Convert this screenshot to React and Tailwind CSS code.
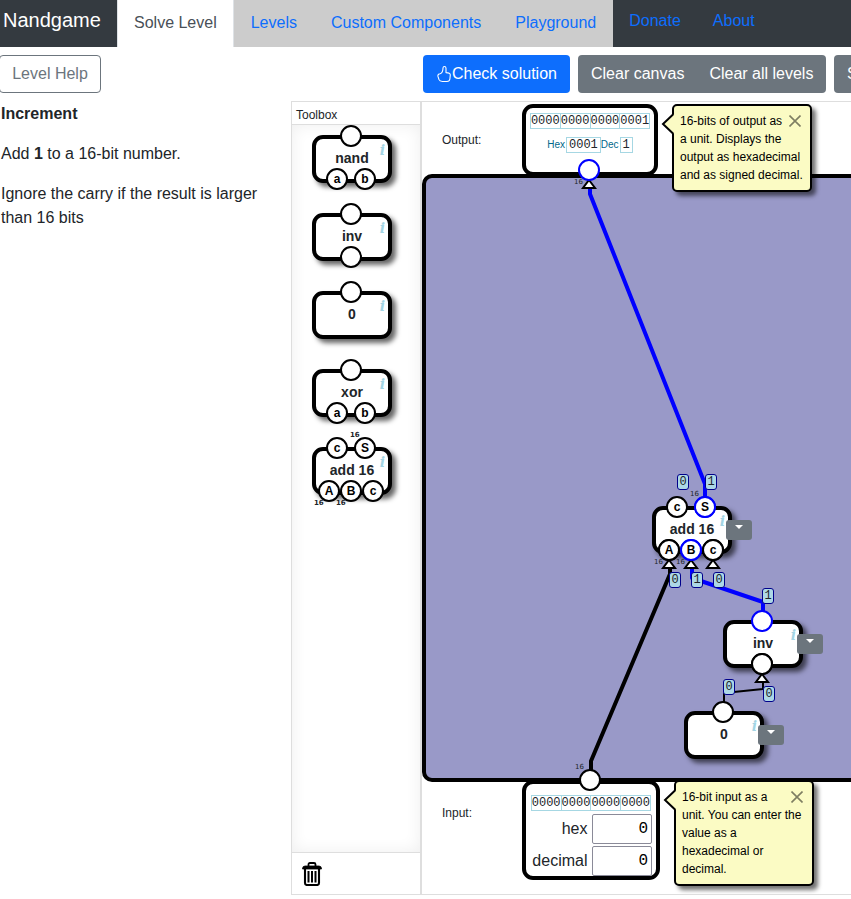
import React from "react";

const sans = "font-['Liberation_Sans',Arial,sans-serif]";
const mono = "font-['Liberation_Mono','Courier_New',monospace]";

function Pin({ label, on }) {
  return (
    <span
      className={`flex size-[22px] items-center justify-center rounded-full border-2 bg-white text-[12px] leading-none font-bold text-black ${on ? "border-[#0000ff]" : "border-black"}`}
    >
      {label}
    </span>
  );
}

function WidthTag({ className, bold }) {
  return (
    <span
      className={`absolute font-['DejaVu_Sans',sans-serif] text-[7px] leading-none text-[#212529] ${bold ? "font-bold" : ""} ${className}`}
    >
      16
    </span>
  );
}

// A component: outputs sit on the top edge and inputs on the bottom edge.
function Component({ name, outs = [""], ins = [], hot = [], wide, boldTags }) {
  return (
    <div className="relative h-12 w-20 rounded-[11px] border-4 border-black bg-white shadow-[4px_4px_5px_rgba(0,0,0,0.6)]">
      <div className="pt-2 text-center text-[14px] leading-[22px] font-bold text-[#212529]">{name}</div>
      <span className="absolute top-[3px] right-[3px] font-['DejaVu_Serif',serif] text-[14px] leading-4 font-bold text-[#a3d5e4] italic">
        i
      </span>
      <div className="absolute -top-[14px] -left-[5px] flex w-20 justify-center gap-1.5">
        {outs.map((p, i) => (
          <Pin key={i} label={p} on={hot.includes(p || "out")} />
        ))}
      </div>
      <div className={`absolute top-[29px] -left-[5px] flex w-20 justify-center ${ins.length > 2 ? "gap-0" : "gap-1.5"}`}>
        {ins.map((p, i) => (
          <Pin key={i} label={p} on={hot.includes(p || "in")} />
        ))}
      </div>
      {wide && (
        <>
          <WidthTag bold={boldTags} className="-top-[19px] left-[34px]" />
          <WidthTag bold={boldTags} className="top-[49px] -left-[2px]" />
          <WidthTag bold={boldTags} className="top-[49px] left-[20px]" />
        </>
      )}
    </div>
  );
}

function MenuButton() {
  return (
    <div className="flex h-5 w-[26px] justify-center rounded-[3px] bg-[#6c757d] pt-[5px]">
      <svg width="8" height="4" viewBox="0 0 8 4">
        <path d="M0 0H8L4 4Z" fill="#fff" />
      </svg>
    </div>
  );
}

function Bit({ x, y, v }) {
  return (
    <span
      className={`absolute flex h-4 w-3 items-center justify-center rounded-[3px] border border-[#00008b] bg-[#add8e6] pb-px text-[12px] leading-none text-[#212529] ${mono}`}
      style={{ left: x, top: y }}
    >
      {v}
    </span>
  );
}

function Word({ groups }) {
  return (
    <div className={`flex border-l border-[#a6d7e3] text-[12px] leading-[14px] text-[#212529] ${mono}`}>
      {groups.map((g, i) => (
        <span key={i} className="border-y border-r border-[#a6d7e3]">
          {g}
        </span>
      ))}
    </div>
  );
}

function Hint({ children, className }) {
  return (
    <div
      className={`relative w-[140px] rounded-[5px] border-2 border-black bg-[#fbfbc4] py-1.5 pl-1.5 text-[12px] leading-[18px] text-black shadow-[4px_4px_4px_rgba(0,0,0,0.55)] ${className}`}
    >
      <svg className="absolute top-[7px] -left-[13px]" width="14" height="22" viewBox="0 0 14 22">
        <path d="M13.5 1L2 11L13.5 21Z" fill="#fbfbc4" />
        <path d="M12 1.5L2 11L12 20.5" fill="none" stroke="#000" strokeWidth="2" />
      </svg>
      <svg className="absolute top-[9px] right-[9px]" width="12" height="12" viewBox="0 0 12 12">
        <path d="M0.5 0.5L11.5 11.5M11.5 0.5L0.5 11.5" stroke="#7e7e62" strokeWidth="1.6" />
      </svg>
      {children}
    </div>
  );
}

const toolbox = [
  { name: "nand", ins: ["a", "b"] },
  { name: "inv", ins: [""] },
  { name: "0" },
  { name: "xor", ins: ["a", "b"] },
  { name: "add 16", outs: ["c", "S"], ins: ["A", "B", "c"], wide: true, boldTags: true },
];

const arrows = [
  [589, 180],
  [669, 560],
  [691, 560],
  [713, 560],
  [762, 674],
];

const bits = [
  [677, 474, 0],
  [705, 474, 1],
  [669, 572, 0],
  [691, 572, 1],
  [713, 572, 0],
  [762, 588, 1],
  [723, 679, 0],
  [763, 686, 0],
];

function Canvas() {
  return (
    <div className="relative h-[792px] w-[429px] overflow-hidden">
      <div className="absolute top-[72px] left-0 h-[608px] w-[460px] rounded-[10px] border-4 border-black bg-[#9999c8]" />

      <div className="absolute top-[32px] left-[20px] text-[12px] leading-3 text-[#212529]">Output:</div>
      <div className="absolute top-[2px] left-[100px] flex h-[72px] w-[136px] flex-col items-center rounded-[11px] border-4 border-black bg-white pt-[5px]">
        <Word groups={["0000", "0000", "0000", "0001"]} />
        <div className="mt-2 flex items-center text-[10px] leading-4 text-[#00688b]">
          Hex
          <span className={`ml-px border border-[#a6d7e3] px-[2px] text-[12px] leading-[14px] text-[#212529] ${mono}`}>0001</span>
          Dec
          <span className={`ml-px border border-[#a6d7e3] px-[2px] text-[12px] leading-[14px] text-[#212529] ${mono}`}>1</span>
        </div>
      </div>

      <div className="absolute top-[705px] left-[20px] text-[12px] leading-3 text-[#212529]">Input:</div>
      <div className="absolute top-[678px] left-[100px] flex h-[100px] w-[138px] flex-col items-end rounded-[11px] border-4 border-black bg-white pt-[11px] pr-[4px]">
        <div className="mr-px">
          <Word groups={["0000", "0000", "0000", "0000"]} />
        </div>
        {["hex", "decimal"].map((n) => (
          <label key={n} className="mt-0.5 flex items-center gap-[4.5px] text-[16px] text-[#212529] first-of-type:mt-[3px]">
            {n}
            <span className={`flex h-[30px] w-[60px] items-center justify-end rounded-[2px] border border-[#8a8a98] bg-white pr-[3px] text-black ${mono}`}>
              0
            </span>
          </label>
        ))}
      </div>

      <div className="absolute top-[404px] left-[230px]">
        <Component name="add 16" outs={["c", "S"]} ins={["A", "B", "c"]} hot={["S", "B"]} wide />
      </div>
      <div className="absolute top-[518px] left-[301px]">
        <Component name="inv" ins={[""]} hot={["out"]} />
      </div>
      <div className="absolute top-[609px] left-[262px]">
        <Component name="0" />
      </div>

      <svg className="absolute top-0 left-0" width="429" height="792" viewBox="422 102 429 792">
        <g fill="none" strokeLinejoin="round">
          <path d="M590 185V194L705 484V497" stroke="#00f" strokeWidth="4" />
          <path d="M692 566V578L763 602V611" stroke="#00f" strokeWidth="4" />
          <path d="M670 566V574L591 761V770" stroke="#000" strokeWidth="4" />
          <path d="M763 680V689L724 693V702" stroke="#000" strokeWidth="2" />
        </g>
        {arrows.map(([x, y]) => (
          <path key={`${x}-${y}`} d={`M${x} ${y}L${x + 6} ${y + 8}H${x - 6}Z`} fill="#fff" stroke="#000" strokeWidth="2" />
        ))}
        <g fill="#fff" strokeWidth="2">
          <circle cx="589" cy="170" r="10" stroke="#00f" />
          <circle cx="590" cy="780" r="10" stroke="#000" />
        </g>
      </svg>
      <div className="absolute top-[394px] left-[272px]">
        <Pin label="S" on />
      </div>
      <div className="absolute top-[437px] left-[236px] flex">
        <Pin label="A" />
        <Pin label="B" on />
        <Pin label="c" />
      </div>
      <div className="absolute top-[551px] left-[329px]">
        <Pin />
      </div>

      <WidthTag className="top-[77px] left-[152px]" />
      <WidthTag className="top-[662px] left-[153px]" />

      {bits.map(([x, y, v]) => (
        <Bit key={`${x}-${y}`} x={x - 422} y={y - 102} v={v} />
      ))}

      <div className="absolute top-[418px] left-[304px]">
        <MenuButton />
      </div>
      <div className="absolute top-[532px] left-[375px]">
        <MenuButton />
      </div>
      <div className="absolute top-[623px] left-[336px]">
        <MenuButton />
      </div>

      <div className="absolute top-[2px] left-[250px]">
        <Hint className="h-[88px]">
          16-bits of output as
          <br />a unit. Displays the
          <br />
          output as hexadecimal
          <br />
          and as signed decimal.
        </Hint>
      </div>
      <div className="absolute top-[678px] left-[252px]">
        <Hint className="h-[106px]">
          16-bit input as a<br />
          unit. You can enter the
          <br />
          value as a<br />
          hexadecimal or
          <br />
          decimal.
        </Hint>
      </div>
    </div>
  );
}

export default function App() {
  return (
    <div className={`h-[899px] w-[851px] overflow-hidden bg-white text-[16px] leading-6 text-[#212529] ${sans}`}>
      <nav className="flex h-[47px] bg-[#343a40]">
        <div className="w-[117px] pt-[5px] pl-[3px] text-[20px] leading-[30px] text-white">Nandgame</div>
        <div className="flex bg-[#ccc] text-[#0d6efd]">
          <a className="border-x border-[#dee2e6] bg-white px-4 pt-[11px] text-[#495057]">Solve Level</a>
          <a className="px-[17px] pt-[11px]">Levels</a>
          <a className="px-[17px] pt-[11px]">Custom Components</a>
          <a className="px-[17px] pt-[11px]">Playground</a>
        </div>
        <a className="px-4 pt-[9px] text-[#0d6efd]">Donate</a>
        <a className="px-4 pt-[9px] text-[#0d6efd]">About</a>
      </nav>

      <div className="flex h-[54px] items-start pt-2 whitespace-nowrap">
        <button className="-ml-px h-[38px] w-[102px] shrink-0 rounded-[4px] border border-[#6c757d] text-[#6c757d]">Level Help</button>
        <button className="ml-[322px] flex h-[38px] w-[147px] shrink-0 items-center rounded-[4px] bg-[#0d6efd] pl-[13px] text-white">
          <svg className="shrink-0" width="16" height="18" viewBox="0 0 16 18" fill="none" stroke="#fff" strokeWidth="1.1" strokeLinejoin="round">
            <path d="M7 3C7.1 0.9 9.9 0.9 10 3.2V7.6C12.8 7.6 14.4 8.3 14.3 10L13.9 14C13.6 15.8 12.8 16.5 11 16.5H6.4C4.6 16.5 3.4 15.8 2.9 14.4L1.9 11.2C1.6 9.6 2.8 9 4 8.8C6 8.2 7 6 7 3Z" />
          </svg>
          Check solution
        </button>
        <div className="ml-2 flex h-[38px] w-[248px] shrink-0 items-center gap-[25px] rounded-[4px] bg-[#6c757d] pl-[13px] text-white">
          <span>Clear canvas</span>
          <span>Clear all levels</span>
        </div>
        <button className="ml-2 h-[38px] w-[60px] shrink-0 rounded-[4px] bg-[#6c757d] pl-[13px] text-left text-white">S</button>
      </div>

      <main className="flex">
        <section className="w-[291px] pt-px pl-px">
          <p className="mb-4 font-bold">Increment</p>
          <p className="mb-4">
            Add <b>1</b> to a 16-bit number.
          </p>
          <p className="w-[270px]">Ignore the carry if the result is larger than 16 bits</p>
        </section>

        <section className="flex h-[794px] w-[560px] border-y border-l border-[#dedede]">
          <aside className="flex w-[129px] flex-col border-r border-[#dedede]">
            <div className="h-[23px] border-b border-[#dedede] pl-1 text-[12px] leading-[26px]">Toolbox</div>
            <div className="flex flex-1 flex-col gap-[30px] pt-[10px] pl-5 shadow-[inset_0_0_16px_rgba(0,0,0,0.07)]">
              {toolbox.map((c) => (
                <Component key={c.name} {...c} />
              ))}
            </div>
            <div className="h-[42px] border-t border-[#dedede] pt-[9px] pl-[10px]">
              <svg width="20" height="24" viewBox="0 0 20 24" fill="none" stroke="#000">
                <path d="M6.5 4V2.5Q6.5 1 8 1H12Q13.5 1 13.5 2.5V4" strokeWidth="1.8" />
                <path d="M0.5 7Q0.5 4 3 4H17Q19.5 4 19.5 7Z" fill="#000" strokeWidth="0.8" />
                <path d="M3 7V21Q3 23 5 23H15Q17 23 17 21V7" strokeWidth="2.1" />
                <path d="M6.5 9V20.5M10 9V20.5M13.5 9V20.5" strokeWidth="2" />
              </svg>
            </div>
          </aside>
          <div className="border-l border-[#dedede]">
            <Canvas />
          </div>
        </section>
      </main>
    </div>
  );
}
